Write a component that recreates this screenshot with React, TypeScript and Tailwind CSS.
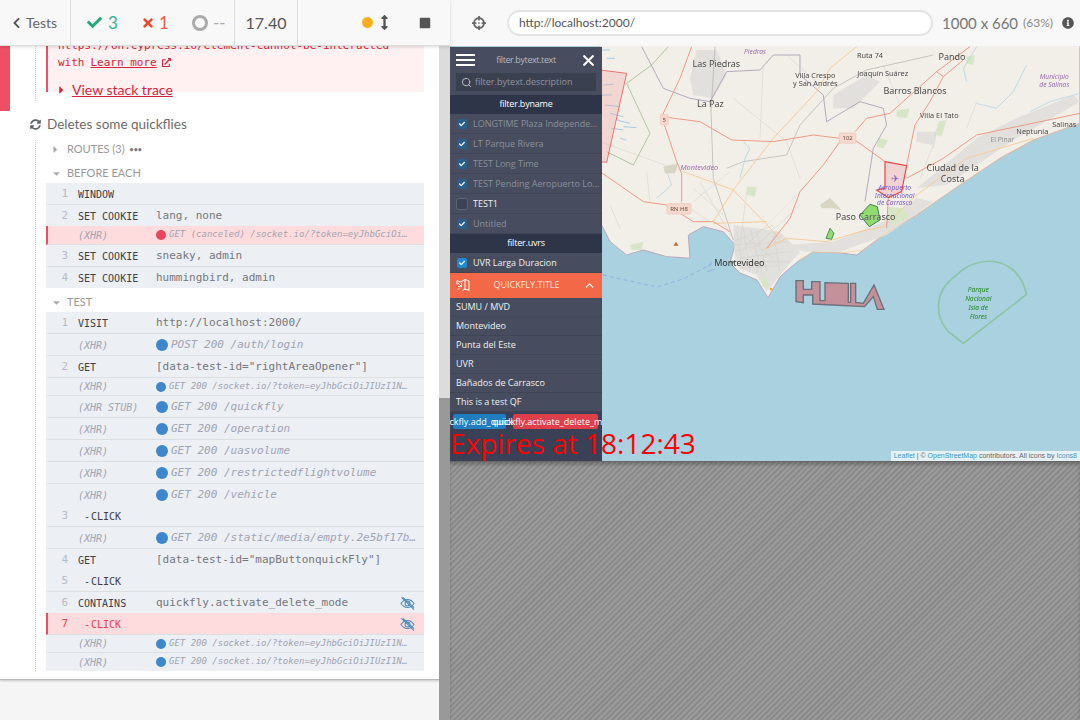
import React from 'react';
import { FaArrowsAltV, FaCheck, FaChevronLeft, FaCrosshairs, FaExternalLinkAlt, FaInfoCircle, FaStop, FaSyncAlt, FaTimes, FaCaretRight, FaCaretDown } from 'react-icons/fa';
import { ChevronUp, Search } from 'lucide-react';

type Row = {
  n?: number;
  name: string;
  msg?: string;
  dot?: 'blue' | 'red';
  small?: boolean;
  flat?: boolean;
  failed?: boolean;
  eye?: boolean;
  child?: boolean;
};

const SOCKET = 'GET 200 /socket.io/?token=eyJhbGciOiJIUzI1N…';

const beforeRows: Row[] = [
  { n: 1, name: 'WINDOW' },
  { n: 2, name: 'SET COOKIE', msg: 'lang, none', flat: true },
  { name: '(XHR)', msg: 'GET (canceled) /socket.io/?token=eyJhbGciOi…', dot: 'red', small: true, failed: true },
  { n: 3, name: 'SET COOKIE', msg: 'sneaky, admin' },
  { n: 4, name: 'SET COOKIE', msg: 'hummingbird, admin', flat: true },
];

const testRows: Row[] = [
  { n: 1, name: 'VISIT', msg: 'http://localhost:2000/' },
  { name: '(XHR)', msg: 'POST 200 /auth/login', dot: 'blue' },
  { n: 2, name: 'GET', msg: '[data-test-id="rightAreaOpener"]' },
  { name: '(XHR)', msg: SOCKET, dot: 'blue', small: true },
  { name: '(XHR STUB)', msg: 'GET 200 /quickfly', dot: 'blue' },
  { name: '(XHR)', msg: 'GET 200 /operation', dot: 'blue' },
  { name: '(XHR)', msg: 'GET 200 /uasvolume', dot: 'blue' },
  { name: '(XHR)', msg: 'GET 200 /restrictedflightvolume', dot: 'blue' },
  { name: '(XHR)', msg: 'GET 200 /vehicle', dot: 'blue', flat: true },
  { n: 3, name: 'CLICK', child: true },
  { name: '(XHR)', msg: 'GET 200 /static/media/empty.2e5bf17b…', dot: 'blue' },
  { n: 4, name: 'GET', msg: '[data-test-id="mapButtonquickFly"]', flat: true },
  { n: 5, name: 'CLICK', child: true },
  { n: 6, name: 'CONTAINS', msg: 'quickfly.activate_delete_mode', eye: true, flat: true },
  { n: 7, name: 'CLICK', child: true, failed: true, eye: true },
  { name: '(XHR)', msg: SOCKET, dot: 'blue', small: true },
  { name: '(XHR)', msg: SOCKET, dot: 'blue', small: true, flat: true },
];

const EyeOff = () => (
  <svg viewBox="0 0 16 16" className="h-[15px] w-[15px] shrink-0" fill="none" stroke="#4d8dbb" strokeWidth="1.1">
    <path d="M1 8c2-3 4.300-4.300 7-4.300S13 5 15 8c-2 3-4.300 4.300-7 4.300S3 11 1 8z" />
    <circle cx="8" cy="8" r="2.600" />
    <path d="M1.500 1.500l13.500 13M3 1.500l12 11" />
  </svg>
);

const CommandRow = ({ row }: { row: Row }) => {
  const isXhr = row.name.startsWith('(');
  const height = row.failed && row.small ? 'h-[19px]' : row.small ? 'h-[18px]' : row.flat ? 'h-[21px] pt-px' : 'h-[22px] pt-px';
  const bg = row.failed ? 'bg-[#fedcdd] border-l-2 border-l-[#ee4d60]' : 'bg-[#ecEff3] border-l-2 border-l-[#ecEff3]';
  const border = row.flat ? '' : 'border-b border-b-[#dcdfe2]';
  return (
    <div className={`flex items-center font-['DejaVu_Sans_Mono',monospace] ${height} ${bg} ${border}`}>
      <span className={`w-[20px] shrink-0 text-right text-[11px] ${row.failed ? 'text-[#e8404f]' : 'text-[#b6bac6]'}`}>
        {row.n ?? ''}
      </span>
      <span
        className={`ml-[10px] w-[78px] shrink-0 whitespace-pre text-[10px] ${
          isXhr ? 'italic text-[#a0a4b3]' : row.failed ? 'text-[#e8404f]' : 'text-[#3f4046]'
        } ${row.child ? 'pl-[6px]' : ''}`}
      >
        {row.child ? '-' : ''}
        {row.child && <span className="ml-px" />}
        {row.name}
      </span>
      {row.dot && (
        <span
          className={`shrink-0 rounded-full ${row.small ? 'mr-[3px] h-[10px] w-[10px]' : 'mr-[3px] h-[12px] w-[12px]'} ${
            row.dot === 'red' ? 'bg-[#e9455e]' : 'bg-[#3e87cc]'
          }`}
        />
      )}
      {row.msg && (
        <span
          className={`whitespace-pre ${row.dot ? 'italic text-[#a0a4b3]' : 'text-[#75777e]'} ${
            row.small ? 'text-[9px]' : 'text-[11px]'
          }`}
        >
          {row.msg}
        </span>
      )}
      {row.eye && (
        <span className="ml-auto mr-[9px]">
          <EyeOff />
        </span>
      )}
    </div>
  );
};

const TopBar = () => (
  <header className="relative z-10 flex h-[46px] shrink-0 items-center bg-[#f8f8f8] font-['Lato',sans-serif] text-[#555]">
    <div className="flex h-full w-[450px] shrink-0 items-center border-b border-b-[#dcdcdc] shadow-[0_1px_3px_rgba(0,0,0,0.15)]">
      <div className="flex h-full w-[71px] shrink-0 items-center border-r border-r-[#ddd] pl-[12px]">
        <FaChevronLeft className="h-[12px] w-[9px] text-[#555]" />
        <span className="ml-[5px] text-[14px] text-[#666]">Tests</span>
      </div>
      <div className="flex h-full w-[164px] shrink-0 items-center border-r border-r-[#ddd] pl-[15px] text-[17px]">
        <FaCheck className="h-[15px] w-[17px] text-[#1fa97c]" />
        <span className="ml-[5px] w-[34px] text-[#2fb48a]">3</span>
        <FaTimes className="h-[14px] w-[12px] text-[#ee4b30]" />
        <span className="ml-[5px] w-[33px] text-[#ee5a45]">1</span>
        <span className="h-[16px] w-[16px] rounded-full border-[3px] border-[#aaa]" />
        <span className="ml-[5px] text-[#aaa]">--</span>
      </div>
      <div className="flex h-full w-[63px] shrink-0 items-center justify-center border-r border-r-[#ddd] text-[16px] text-[#555]">
        17.40
      </div>
      <div className="flex flex-1 items-center">
        <span className="ml-[64px] h-[11px] w-[11px] rounded-full bg-[#fcae1e]" />
        <FaArrowsAltV className="ml-[7px] h-[15px] w-[9px] text-[#555]" />
        <FaStop className="ml-[30px] h-[12px] w-[12px] text-[#555]" />
      </div>
    </div>
    <div className="flex h-full flex-1 items-center">
      <FaCrosshairs className="ml-[22px] h-[14px] w-[14px] text-[#666]" />
      <div className="ml-[21px] flex h-[26px] w-[426px] items-center rounded-full border-2 border-[#e3e3e3] bg-white pl-[10px] text-[12px] text-[#555]">
        http://localhost:2000/
      </div>
      <span className="ml-[9px] text-[15px] text-[#777]">1000 x 660</span>
      <span className="ml-[5px] text-[12px] text-[#888]">(63%)</span>
      <FaInfoCircle className="ml-[9px] h-[12px] w-[12px] text-[#555]" />
    </div>
  </header>
);

const ReporterPane = () => (
  <div className="flex min-h-0 flex-1">
    <div className="flex w-[439px] shrink-0 flex-col overflow-hidden bg-[#f5f5f5] font-['Lato',sans-serif]">
      <div className="h-[634px] shrink-0 overflow-hidden border-b border-b-[#bbb] bg-white shadow-[0_1px_2px_rgba(0,0,0,0.2)]">
        <div className="flex h-[65px]">
          <div className="w-[10px] shrink-0 bg-[#f04e63]" />
          <div className="ml-[25px] h-[55px] w-[389px] border-l border-dotted border-l-[#ccc] pl-[10px]">
            <div className="h-full border-l-2 border-l-[#f04e63] bg-[#fff1f1] pl-[10px] font-['DejaVu_Sans_Mono',monospace] text-[11px] text-[#d8243a]">
              <div className="-mt-[9px] truncate leading-[17px]">https://on.cypress.io/element-cannot-be-interacted</div>
              <div className="flex items-center leading-[17px]">
                with <span className="ml-[6px] underline">Learn more</span>
                <FaExternalLinkAlt className="ml-[5px] h-[9px] w-[9px]" />
              </div>
              <div className="mt-[10px] flex items-center font-['Lato',sans-serif] text-[14px] leading-[18px]">
                <FaCaretRight className="h-[12px] w-[7px]" />
                <span className="ml-[7px] underline">View stack trace</span>
              </div>
            </div>
          </div>
        </div>
        <div className="flex h-[26px] items-center pl-[30px] text-[13.500px] text-[#6b6b6b]">
          <FaSyncAlt className="h-[11px] w-[11px] text-[#5b6468]" />
          <span className="ml-[6px]">Deletes some quickflies</span>
        </div>
        <div className="ml-[35px] mt-[3px] w-[389px] border-l border-dotted border-l-[#ccc] pl-[10px]">
          <div className="flex h-[18px] items-center pl-[6px] text-[11px] text-[#999]">
            <FaCaretRight className="h-[11px] w-[7px] text-[#aaa]" />
            <span className="ml-[8px]">ROUTES (3)</span>
            <span className="ml-[5px] text-[7px] font-bold leading-none text-[#777]">•••</span>
          </div>
          <div className="mt-[6px] flex h-[19px] items-center pl-[6px] text-[11px] text-[#999]">
            <FaCaretDown className="h-[11px] w-[9px] text-[#aaa]" />
            <span className="ml-[6px]">BEFORE EACH</span>
          </div>
          {beforeRows.map((row, i) => (
            <CommandRow key={i} row={row} />
          ))}
          <div className="flex h-[24px] items-center pl-[6px] pt-[4px] text-[11px] text-[#999]">
            <FaCaretDown className="h-[11px] w-[9px] text-[#aaa]" />
            <span className="ml-[6px]">TEST</span>
          </div>
          {testRows.map((row, i) => (
            <CommandRow key={i} row={row} />
          ))}
        </div>
      </div>
    </div>
    <div className="flex w-[11px] shrink-0 flex-col bg-[#dcdcdc]">
      <div className="mt-auto h-[322px] bg-[#999]" />
    </div>
  </div>
);

const MapLayer = () => (
  <svg viewBox="450 46 630 415" className="absolute inset-0 h-[415px] w-[630px] blur-[0.4px]" fontFamily="'Noto Sans', sans-serif">
    <rect x="450" y="46" width="630" height="415" fill="#aad1df" />
    <path d="M603,275 L657,287 L683,279 L712,264" fill="none" stroke="#8fa6e6" strokeWidth="0.800" strokeDasharray="4 3" />
    <g transform="translate(600 45) scale(0.3333)">
      <path
        d="M0,0 H1440 V235 L1300,285 L1200,340 L1080,420 L950,510 L850,570 L790,615 L771,630 L720,624 L639,621 L600,645 L570,669 L540,696 L504,759 L471,705 L420,684 L390,654 L405,600 L370,560 L310,545 L265,570 L270,640 L200,635 L130,615 L80,630 L30,590 L5,540 L0,530 Z"
        fill="#f2efe9"
        stroke="#b8a8c0"
        strokeWidth="3"
      />
      {/* urban patches */}
      <g fill="#e2e0dc">
        <path d="M290,15 L350,15 L380,90 L340,160 L280,150 L270,100 Z" />
        <path d="M700,150 L800,90 L840,110 L760,190 L700,190 Z" />
        <path d="M400,540 L540,560 L600,620 L540,690 L500,740 L470,690 L420,670 L405,640 Z" />
        <path d="M560,600 L700,590 L850,530 L950,460 L1000,470 L860,570 L720,620 L610,620 Z" />
        <path d="M950,430 L1130,280 L1250,220 L1420,150 L1440,170 L1250,280 L1040,420 Z" />
        <path d="M950,260 L1010,260 L1000,300 L950,290 Z" />
      </g>
      <g fill="#d8e6c8">
        <path d="M890,195 L930,190 L920,220 L890,215 Z" />
        <path d="M1015,230 L1040,225 L1025,275 L1008,270 Z" />
        <path d="M835,280 L865,285 L850,310 L830,305 Z" />
        <path d="M865,485 L910,490 L930,515 L880,540 L860,520 Z" />
        <path d="M90,600 L130,590 L125,615 L95,615 Z" />
        <path d="M440,425 L470,425 L465,455 L440,450 Z" />
        <path d="M1100,35 L1125,30 L1120,60 L1100,55 Z" />
        <path d="M480,700 L500,695 L505,730 L490,725 Z" />
      </g>
      <path d="M190,365 L235,355 L225,385 L195,385 Z" fill="#d8d6c2" />
      <path d="M660,480 L690,458 L725,495 L700,490 L665,490 Z" fill="#d8d6c2" />
      <circle cx="513" cy="732" r="4" fill="#f5a623" />
      <circle cx="397" cy="652" r="5" fill="#6fa878" />
      {/* thin grey streets */}
      <g fill="none" stroke="#d0cec9" strokeWidth="1.500">
        <path d="M0,290 L250,380 M400,160 L560,290 L600,400 M490,60 L480,280 M390,380 L280,470 M410,600 L300,410 M420,600 L440,440 M430,610 L620,420 M450,620 L600,480 M400,590 L520,540 M150,470 L140,380 M30,480 L60,550 M1000,310 L1010,250 M660,120 L560,30 M1130,170 L1100,250 M900,180 L850,60 M960,400 L1000,300" />
        <path d="M400,620 L480,600 M420,640 L560,620 M440,580 L520,640 M470,560 L500,680 M530,560 L470,680 M240,470 L330,530 M280,430 L370,510" />
        <path d="M410,560 L430,680 M430,550 L450,680 M450,550 L490,700 M400,600 L560,590 M405,650 L570,650 M420,670 L550,660 M520,560 L540,680" />
      </g>
      <g fill="none" stroke="#a8a8a6" strokeWidth="1.800">
        <path d="M345,5 L333,200 L340,400 L400,585" />
        <path d="M380,370 L430,350 L560,330 L600,240 L700,130 L800,75 L1000,30" />
      </g>
      {/* boundaries */}
      <path
        d="M125,5 L190,130 L270,160 L330,170 L380,80 L480,75 L520,30 L600,30 L600,90 L670,150 L680,230 L780,170 L850,190 L860,240 L820,310 L795,470"
        fill="none"
        stroke="#b5a9be"
        strokeWidth="3"
      />
      <path d="M205,5 L155,60 L80,115 L150,265 L100,360 L20,320" fill="none" stroke="#aec6a0" strokeWidth="3" />
      {/* rivers */}
      <g fill="none" stroke="#b3d6e5" strokeWidth="2.500">
        <path d="M430,290 L450,310 L435,340 L420,400" />
        <path d="M200,380 L215,420 L170,460" />
        <path d="M1280,60 L1240,140 L1190,190 L1130,175" />
        <path d="M1290,200 L1350,170 L1440,145" />
        <path d="M1130,5 L1090,70 L1100,110" />
      </g>
      {/* motorways */}
      <g fill="none" stroke="#f7cc9a" strokeWidth="3">
        <path d="M770,5 L690,70 L650,140 L520,280 L400,435 L340,530" />
        <path d="M250,380 L400,435 L540,580" />
        <path d="M340,535 L500,530" />
        <path d="M490,615 L560,580 L680,590 L780,560 L850,545 L950,450 L1100,340 L1300,280" />
        <path d="M600,645 L639,621 L720,624 L790,615 L850,570 L950,510 L1080,420 L1200,340 L1300,285 L1440,235" strokeWidth="2" />
      </g>
      {/* primary roads */}
      <g fill="none" stroke="#ee9a82" strokeWidth="3">
        <path d="M275,5 L240,100 L185,215 L230,350 L245,385 L245,470" />
        <path d="M185,215 L300,230 L395,285 L520,290 L640,270 L720,280 L765,285 L855,350" />
        <path d="M0,380 L130,470 L200,480 L280,530 L340,530 L390,560" />
        <path d="M720,290 L670,360 L600,440 L570,520 L500,610" />
        <path d="M765,260 L800,220 L870,205 L1010,80 L1110,5" />
        <path d="M1010,80 L1030,95 L1090,45" />
        <path d="M920,360 L945,240 L990,170 L1030,95" />
        <path d="M920,400 L1030,340 L1130,270 L1250,245 L1440,205" />
        <path d="M865,458 L860,550" />
      </g>
      {/* blue marks in the delta */}
      <g stroke="#7db9ec" strokeWidth="2" fill="none">
        <path d="M5,15 L30,15 M20,40 L45,40 M10,120 L40,118 M0,150 L35,150 M15,180 L60,185 M30,205 L70,215 M50,225 L90,235 M70,245 L110,248 M35,250 L70,255 M60,280 L80,285" />
        <path d="M335,650 L325,665 M322,680 L345,672" stroke="#8f9cf0" />
      </g>
      <path d="M0,75 L80,85 L20,352 L0,350 Z" fill="#ef9a9a" fillOpacity="0.3" stroke="#ee5a5a" strokeWidth="2.500" />
      {/* airport */}
      <path
        d="M855,350 L920,362 L905,440 L865,458 L830,435 L855,430 Z"
        fill="#eea0a8"
        fillOpacity="0.35"
        stroke="#ee4444"
        strokeWidth="3.500"
      />
      <path d="M780,510 L810,478 L832,485 L840,525 L808,545 Z" fill="#8fdc72" stroke="#3f7f45" strokeWidth="3" />
      <path d="M678,580 L690,550 L702,565 L695,583 Z" fill="#8fdc72" stroke="#3f7f45" strokeWidth="2.500" />
      <path d="M220,602 L228,590 L236,602 Z" fill="#b8703c" />
      <text x="885" y="410" fontSize="30" fill="#8a64c8" textAnchor="middle">✈</text>
      {/* labels */}
      <g fill="#4a4a4a" textAnchor="middle" fontSize="25" stroke="#f2efe9" strokeWidth="0.500" paintOrder="stroke">
        <text x="349" y="66" fontSize="27">Las Piedras</text>
        <text x="331" y="186" fontSize="27">La Paz</text>
        <text x="646" y="98" fontSize="22">Villa Crespo</text>
        <text x="646" y="124" fontSize="22">y San Andrés</text>
        <text x="810" y="38" fontSize="22">Ruta 74</text>
        <text x="848" y="93" fontSize="22">Joaquín Suárez</text>
        <text x="1056" y="45" fontSize="27">Pando</text>
        <text x="945" y="147" fontSize="27">Barros Blancos</text>
        <text x="1018" y="220" fontSize="22">Villa El Tato</text>
        <text x="1393" y="245" fontSize="22">Salinas</text>
        <text x="1297" y="267" fontSize="22">Neptunia</text>
        <text x="1207" y="292" fontSize="20" fill="#8a8a8a">El Pinar</text>
        <text x="1058" y="377" fontSize="27">Ciudad de la</text>
        <text x="1058" y="411" fontSize="27">Costa</text>
        <text x="797" y="524" fontSize="27">Paso Carrasco</text>
        <text x="418" y="664" fontSize="27" stroke="none" fill="#333">Montevideo</text>
      </g>
      <g fill="#9a6fb0" fontStyle="italic" textAnchor="middle" fontSize="22">
        <text x="298" y="374">Montevideo</text>
        <text x="1363" y="102" fontSize="20">Municipio</text>
        <text x="1363" y="125" fontSize="20">de Salinas</text>
        <text x="465" y="28" fontSize="20">Piedras</text>
      </g>
      <g fill="#7a5cc8" fontStyle="italic" textAnchor="middle" fontSize="20">
        <text x="884" y="436">Aeropuerto</text>
        <text x="884" y="458">Internacional</text>
        <text x="884" y="480">de Carrasco</text>
      </g>
      <g textAnchor="middle" fontSize="18" fill="#6b4a40">
        <rect x="181" y="209" width="24" height="31" rx="3" fill="#f6d8cc" stroke="#f0c4b4" strokeWidth="2" />
        <text x="193" y="231">5</text>
        <rect x="718" y="264" width="50" height="31" rx="3" fill="#f6d8cc" stroke="#f0c4b4" strokeWidth="2" />
        <text x="743" y="286">102</text>
        <rect x="201" y="476" width="72" height="31" rx="3" fill="#f6d8cc" stroke="#f0c4b4" strokeWidth="2" />
        <text x="237" y="498">RN H8</text>
      </g>
    </g>
    <g transform="translate(700 240) scale(0.3333)">
      <path
        d="M288,122 L310,122 L310,148 L335,148 L335,125 L360,125 L360,182 L375,182 L375,128 L445,130 L445,187 L452,187 L452,130 L467,130 L467,187 L490,190 L522,135 L552,208 L532,208 L520,170 L494,200 L338,192 L338,165 L310,165 L310,188 L288,185 Z"
        fill="#c4909a"
        stroke="#69707a"
        strokeWidth="4"
      />
      <path d="M980,163 L790,310 L745,275 C700,225 705,150 770,105 C830,45 950,40 980,163 Z" fill="none" stroke="#8cc4a6" strokeWidth="5" />
      <g fill="#1f8a1f" fontStyle="italic" textAnchor="middle" fontSize="20">
        <text x="835" y="155">Parque</text>
        <text x="835" y="182">Nacional</text>
        <text x="835" y="209">Isla de</text>
        <text x="835" y="236">Flores</text>
      </g>
    </g>
  </svg>
);

const FilterRow = ({ label, muted, checked = true, bright }: { label: string; muted?: boolean; checked?: boolean; bright?: boolean }) => (
  <div className="flex h-[20px] items-center border-b border-b-[#3f4556] pl-[7px] pt-px">
    {checked ? (
      <span className={`flex h-[10px] w-[10px] shrink-0 items-center justify-center rounded-[2px] ${bright ? 'bg-[#1e88d0]' : 'bg-[#2a5f8c]'}`}>
        <FaCheck className="h-[6px] w-[6px] text-white" />
      </span>
    ) : (
      <span className="-ml-px mr-[-1px] h-[12px] w-[12px] shrink-0 rounded-[3px] border border-[#5b6273] bg-[#3b4354]" />
    )}
    <span className={`ml-[6px] truncate text-[9px] ${muted ? 'text-[#8a8f9c]' : 'text-[#f0f0f0]'}`}>{label}</span>
  </div>
);

const SidePanel = () => (
  <aside className="relative mt-px flex h-[414px] w-[152px] flex-col bg-[#3a4055] font-['Open_Sans',sans-serif] text-white">
    <div className="flex h-[26px] items-center bg-[#474d5f] pl-[6px] pr-[8px]">
      <div className="flex w-[19px] flex-col gap-[3px]">
        <span className="h-[2px] bg-white" />
        <span className="h-[2px] bg-white" />
        <span className="h-[2px] bg-white" />
      </div>
      <span className="flex-1 pr-[6px] text-center text-[9px] tracking-[-0.4px] text-[#b4b8c2]">filter.bytext.text</span>
      <svg viewBox="0 0 11 11" className="h-[11px] w-[11px]" fill="none" stroke="white" strokeWidth="2">
        <path d="M0.500 0.500l10 10M10.500 0.500l-10 10" />
      </svg>
    </div>
    <div className="bg-[#474d5f] px-[6px] pb-[4px]">
      <div className="flex h-[18px] items-center bg-[#3a4050] pl-[5px] text-[9px] text-[#8f94a0]">
        <Search className="h-[11px] w-[11px] text-[#c5c8d0]" />
        <span className="ml-[3px]">filter.bytext.description</span>
      </div>
    </div>
    <div className="flex h-[19px] shrink-0 items-center justify-center bg-[#2f3549] pb-px text-[9px] tracking-[-0.2px]">filter.byname</div>
    <div className="bg-[#474d5f]">
      <FilterRow label="LONGTIME Plaza Independen..." muted />
      <FilterRow label="LT Parque Rivera" muted />
      <FilterRow label="TEST Long Time" muted />
      <FilterRow label="TEST Pending Aeropuerto Lo..." muted />
      <FilterRow label="TEST1" checked={false} />
      <FilterRow label="Untitled" muted />
    </div>
    <div className="flex h-[19px] shrink-0 items-center justify-center bg-[#2f3549] pb-px text-[9px] tracking-[-0.2px]">filter.uvrs</div>
    <div className="bg-[#474d5f]">
      <FilterRow label="UVR Larga Duracion" bright />
    </div>
    <div className="flex h-[25px] shrink-0 items-center bg-[#f36846] pb-px pl-[6px] pr-[6px]">
      <svg viewBox="0 0 14 14" className="h-[14px] w-[14px]" fill="none" stroke="white" strokeWidth="1">
        <path d="M1 2.500l3.500 1.500L9 1.500l4 1.500v9.500L9 11v-9.500M1 2.500v4M9 11l-2.500 1.500" />
        <path d="M2 5l3.500 3.500M5.500 5v3.500H2M1.500 12l2-2" />
      </svg>
      <span className="flex-1 text-center text-[9px] text-[#fde3dc]">QUICKFLY.TITLE</span>
      <ChevronUp className="h-[13px] w-[13px] text-white" />
    </div>
    <div className="bg-[#474d5f] text-[9px] text-[#f0f0f0]">
      {['SUMU / MVD', 'Montevideo', 'Punta del Este', 'UVR', 'Bañados de Carrasco', 'This is a test QF'].map((name) => (
        <div key={name} className="flex h-[19px] items-center border-b border-b-[#3f4556] pl-[6px]">
          {name}
        </div>
      ))}
    </div>
    <div className="flex h-[19px] shrink-0 items-center overflow-hidden pl-[3px] text-[9px]">
      <span className="flex h-[15px] w-[53px] shrink-0 justify-center rounded-[2px] bg-[#1f7dc0] leading-[15px]">
        <span className="whitespace-nowrap">quickfly.add_quickfly</span>
      </span>
      <span className="ml-[7px] flex h-[15px] w-[85px] shrink-0 justify-center rounded-[2px] bg-[#de3f4a] leading-[15px]">
        <span className="whitespace-nowrap">quickfly.activate_delete_mode</span>
      </span>
    </div>
    <div className="h-[30px] w-[300px] shrink-0 whitespace-nowrap text-[28px] leading-[24px] text-[#f00]">Expires at 18:12:43</div>
  </aside>
);

const Preview = () => (
  <div className="flex min-h-0 flex-1 flex-col">
    <div className="relative h-[415px] shrink-0 overflow-hidden">
      <MapLayer />
      <SidePanel />
      <div className="absolute bottom-0 right-0 whitespace-nowrap bg-white/70 px-[3px] font-['Liberation_Sans',sans-serif] text-[7px] leading-[10px] text-[#666]">
        <span className="text-[#3f96bc]">Leaflet</span> | © <span className="text-[#3f96bc]">OpenStreetMap</span> contributors. All icons by{' '}
        <span className="text-[#3f96bc]">Icons8</span>
      </div>
    </div>
    <div className="min-h-0 flex-1 border-t border-t-[#666] bg-[repeating-linear-gradient(135deg,#8a8a8a_0,#8a8a8a_2px,#9a9a9a_2px,#9a9a9a_4px)] shadow-[inset_0_3px_3px_rgba(0,0,0,0.2)]" />
  </div>
);

export default function App() {
  return (
    <div className="flex h-[720px] w-[1080px] flex-col overflow-hidden bg-[#f5f5f5]">
      <TopBar />
      <div className="flex min-h-0 flex-1">
        <div className="flex w-[450px] shrink-0">
          <ReporterPane />
        </div>
        <div className="flex w-[630px] shrink-0">
          <Preview />
        </div>
      </div>
    </div>
  );
}
